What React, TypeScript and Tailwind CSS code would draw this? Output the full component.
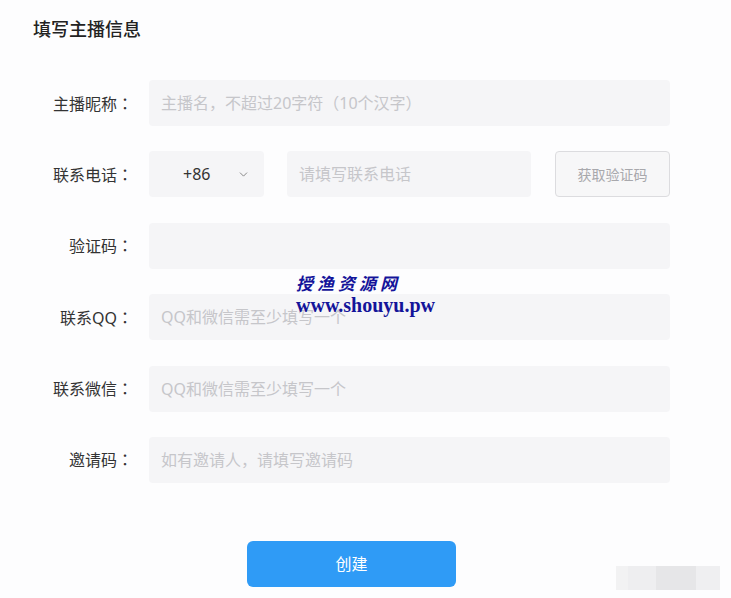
import { ChevronDown } from "lucide-react";

const font = { fontFamily: '"Noto Sans", "Noto Sans CJK SC", sans-serif' };
const colon = { fontFamily: '"Noto Sans CJK JP", sans-serif' };

function Row({ label, children }: { label: string; children: React.ReactNode }) {
  return (
    <div className="flex items-center h-[46px]">
      <div className="w-[100px] text-right text-[16px] text-[#333]">
        {label}
        <span style={colon}>：</span>
      </div>
      <div className="ml-[16px] flex flex-1">{children}</div>
    </div>
  );
}

function Field({ placeholder, w }: { placeholder?: string; w?: string }) {
  return (
    <div className={`${w ?? "w-[521px]"} h-[46px] bg-[#f5f5f7] rounded-[4px] flex items-center px-[12px] text-[16px] text-[#c6c6ca]`}>
      {placeholder}
    </div>
  );
}

export default function App() {
  return (
    <div className="relative w-[731px] h-[598px] bg-[#fdfdfe] overflow-hidden" style={font}>
      <div className="pl-[33px] pt-[15px] text-[18px] text-[#222] font-medium leading-[28px]">填写主播信息</div>

      <div className="mt-[37px] pl-[33px] flex flex-col gap-[25.4px]">
        <Row label="主播昵称">
          <Field placeholder="主播名，不超过20字符（10个汉字）" />
        </Row>
        <Row label="联系电话">
          <div className="w-[115px] h-[46px] bg-[#f5f5f7] rounded-[4px] flex items-center pl-[34px] pr-[14px] justify-between">
            <span className="text-[16px] text-[#333]">+86</span>
            <ChevronDown className="w-[13px] h-[13px] text-[#777]" strokeWidth={1.6} />
          </div>
          <div className="ml-[23px]">
            <Field placeholder="请填写联系电话" w="w-[244px]" />
          </div>
          <div className="ml-[24px] w-[115px] h-[46px] border border-[#dcdcdf] bg-[#f7f7f8] rounded-[4px] flex items-center justify-center text-[14px] text-[#a8a8ac]">
            获取验证码
          </div>
        </Row>
        <Row label="验证码">
          <Field />
        </Row>
        <Row label="联系QQ">
          <Field placeholder="QQ和微信需至少填写一个" />
        </Row>
        <Row label="联系微信">
          <Field placeholder="QQ和微信需至少填写一个" />
        </Row>
        <Row label="邀请码">
          <Field placeholder="如有邀请人，请填写邀请码" />
        </Row>
      </div>

      <div className="mt-[58px] ml-[247px] w-[209px] h-[46px] rounded-[6px] bg-[#2f9bf6] flex items-center justify-center text-white text-[16px]">
        创建
      </div>

      {/* watermark */}
      <div
        className="absolute left-[296px] top-[274px] flex flex-col items-start text-[#14149a] font-bold leading-[21px]"
        style={{ fontFamily: '"Liberation Serif", "Noto Sans CJK SC", serif' }}
      >
        <span className="text-[17px] tracking-[4px] italic">授渔资源网</span>
        <span className="text-[20px]">www.shouyu.pw</span>
      </div>

      {/* blurred patch bottom right */}
      <div className="absolute left-[616px] top-[566px] flex h-[24px]">
        <div className="w-[12px] bg-[#f2f2f3]" />
        <div className="w-[28px] bg-[#eeeef0]" />
        <div className="w-[40px] bg-[#e6e6e8]" />
        <div className="w-[24px] bg-[#efeff1]" />
      </div>
    </div>
  );
}
